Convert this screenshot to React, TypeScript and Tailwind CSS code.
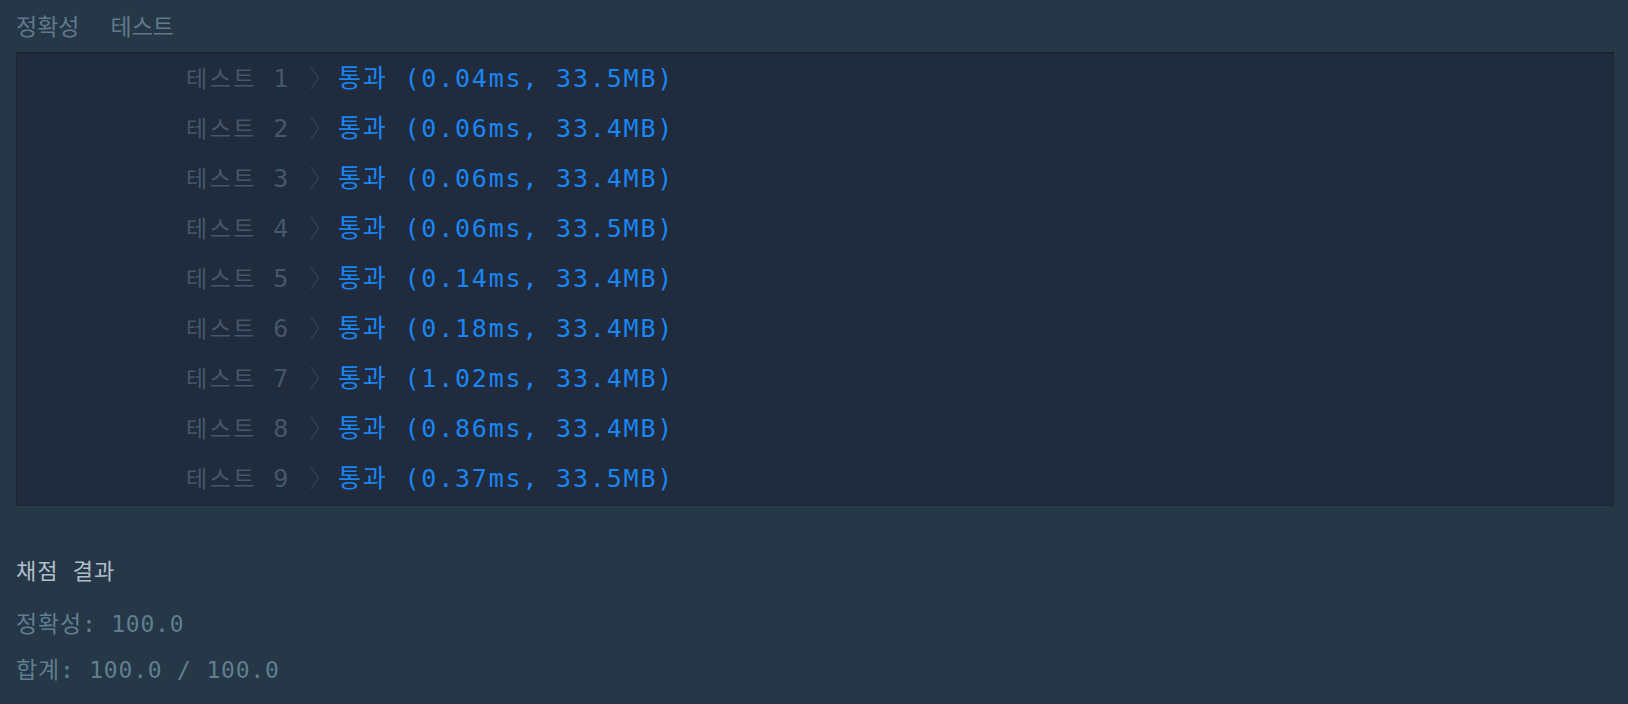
import React from "react";

const rows = [
  ["1", "0.04ms, 33.5MB"],
  ["2", "0.06ms, 33.4MB"],
  ["3", "0.06ms, 33.4MB"],
  ["4", "0.06ms, 33.5MB"],
  ["5", "0.14ms, 33.4MB"],
  ["6", "0.18ms, 33.4MB"],
  ["7", "1.02ms, 33.4MB"],
  ["8", "0.86ms, 33.4MB"],
  ["9", "0.37ms, 33.5MB"],
];

function Chevron() {
  return (
    <svg width="10" height="24" viewBox="0 0 10 24" className="shrink-0">
      <path d="M1 1 L8.5 12 L1 23" fill="none" stroke="#34445a" strokeWidth="1.3" />
    </svg>
  );
}

export default function App() {
  return (
    <div className="w-full h-[704px] bg-[#263747] font-['DejaVu_Sans_Mono','Noto_Sans_CJK_KR',monospace] overflow-hidden">
      <div className="h-[52px] flex items-center pl-4 gap-[31px] text-[23px] leading-none text-[#5f7a8c] font-['Noto_Sans_CJK_KR',sans-serif] pb-[2px]">
        <span>정확성</span>
        <span>테스트</span>
      </div>
      <div className="ml-4 mr-[14px] bg-[#202b3d] border border-[#1a2434] border-t-2 pb-[1px]">
        {rows.map(([n, r]) => (
          <div key={n} className="h-[50px] flex items-center pl-[169px] pb-[2px] leading-none">
            <span className="text-[#44576c] w-[108px] shrink-0 text-[23px] tracking-[2.5px]">
              테스트 <span className="text-[25px] tracking-normal">{n}</span>
            </span>
            <span className="ml-[16px] mr-[18px] flex items-center"><Chevron /></span>
            <span className="text-[#1a86f4] text-[25px] tracking-[1.8px]">통과 ({r})</span>
          </div>
        ))}
      </div>
      <div className="pl-4 pt-[55px] text-[22px] leading-none text-[#b0bfcc] tracking-[1px]">채점 결과</div>
      <div className="pl-4 pt-[30px] text-[23px] leading-none text-[#5f7f91] tracking-[0.8px]">정확성: 100.0</div>
      <div className="pl-4 pt-[23px] text-[23px] leading-none text-[#5f7f91] tracking-[0.8px]">합계: 100.0 / 100.0</div>
    </div>
  );
}
